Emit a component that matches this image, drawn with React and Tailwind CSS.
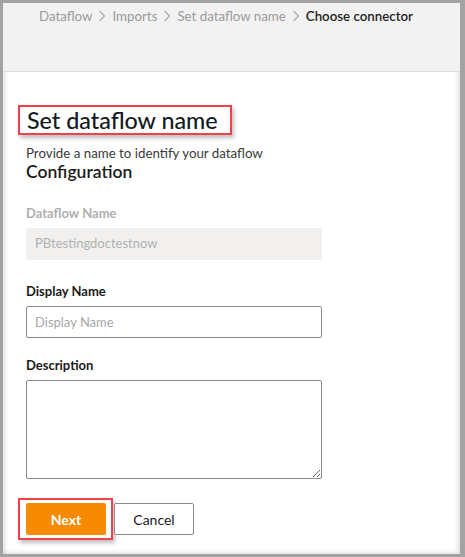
const CRUMBS = ['Dataflow', 'Imports', 'Set dataflow name']

function Chevron() {
  return (
    <svg width="8" height="12" viewBox="0 0 8 12" className="mx-[6px]" aria-hidden="true">
      <path d="M1.5 1 L6.5 6 L1.5 11" fill="none" stroke="#a8a8a8" strokeWidth="1.1" />
    </svg>
  )
}

function Field({ label, children, muted, className = '' }) {
  return (
    <div className={`flex flex-col ${className}`}>
      <div className={`text-[13px] font-bold leading-[18px] ${muted ? 'text-[#b0b0b0]' : 'text-[#1b1b1b]'}`}>
        {label}
      </div>
      {children}
    </div>
  )
}

export default function App() {
  return (
    <div
      className="h-[557px] w-[465px] bg-[#a3a3a3] pt-[3px] pl-[3px] pr-[5px] pb-[3px]"
      style={{ fontFamily: 'Lato, "Open Sans", sans-serif' }}
    >
      <div className="flex h-[551px] flex-col bg-white shadow-[inset_2px_2px_4px_rgba(0,0,0,0.12),inset_-3px_-2px_4px_rgba(0,0,0,0.1)]">
        <div className="flex h-[69px] shrink-0 items-start border-b border-[#dcdcdc] bg-[#f2f2f2] pl-[36px] pt-[4px]">
          <div className="flex items-center text-[13.3px] leading-[18px]">
            {CRUMBS.map((c) => (
              <span key={c} className="flex items-center text-[#9a9a9a]">
                {c}
                <Chevron />
              </span>
            ))}
            <span className="font-semibold text-[#1e1e1e]">Choose connector</span>
          </div>
        </div>

        <div className="flex flex-col pl-[15px] pt-[33px]">
          <div className="self-start border-2 border-[#f2404c] pb-0 pl-[7px] pr-[12px] pt-[1px] shadow-[2px_3px_4px_rgba(0,0,0,0.25)]">
            <h1 className="text-[23.3px] font-medium leading-[25px] text-[#141a24]">Set dataflow name</h1>
          </div>
          <p className="ml-[8px] mt-[9px] text-[13.3px] leading-[18px] text-[#3a3a3a]">
            Provide a name to identify your dataflow
          </p>
          <h2 className="ml-[8px] text-[17.5px] font-semibold leading-[20px] text-[#1b1b1b]">Configuration</h2>

          <div className="ml-[8px] mt-[22px] flex w-[296px] flex-col">
            <Field label="Dataflow Name" muted>
              <div className="mt-[6px] flex h-[32px] items-center rounded-[2px] bg-[#f1f0ef] px-[9px] text-[13px] text-[#b0b0b0]">
                PBtestingdoctestnow
              </div>
            </Field>
            <Field label="Display Name" className="mt-[22px]">
              <input
                placeholder="Display Name"
                className="mt-[6px] h-[32px] rounded-[2px] border border-[#8a8a8a] px-[8px] text-[13px] text-[#333] outline-none placeholder:text-[#a8a8a8]"
              />
            </Field>
            <Field label="Description" className="mt-[18px]">
              <textarea className="mt-[6px] block h-[99px] resize rounded-[2px] border border-[#8a8a8a] px-[8px] text-[13px] outline-none" />
            </Field>
          </div>

          <div className="mt-[19px] flex items-center">
            <div className="border-2 border-[#f2404c] pb-[3px] pl-[6px] pr-[5px] pt-[3px] shadow-[2px_3px_4px_rgba(0,0,0,0.25)]">
              <button className="block h-[32px] w-[80px] rounded-[2px] bg-[#f68a00] text-[14px] font-bold text-white">
                Next
              </button>
            </div>
            <button className="ml-[1px] h-[32px] w-[80px] rounded-[2px] border border-[#8a8a8a] bg-white text-[14px] text-[#1b1b1b]">
              Cancel
            </button>
          </div>
        </div>
      </div>
    </div>
  )
}
